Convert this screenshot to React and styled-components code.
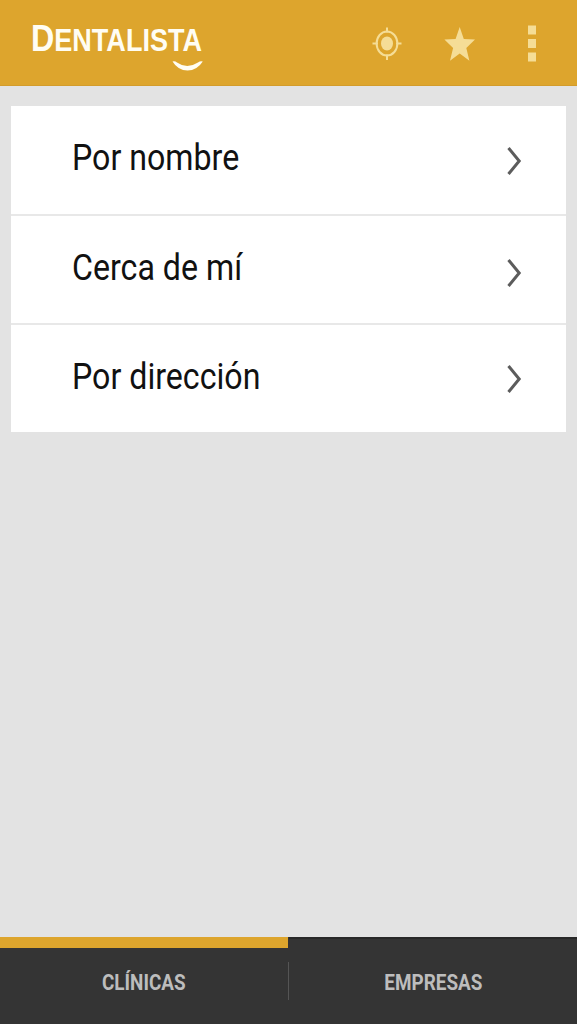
import React from "react";
import styled, { createGlobalStyle } from "styled-components";

const GlobalStyle = createGlobalStyle`
  * { box-sizing: border-box; }
  body { margin: 0; background: #e3e3e3; font-family: Roboto, "Liberation Sans", sans-serif; }
`;

const Screen = styled.div`
  display: flex;
  flex-direction: column;
  width: 100%;
  height: 100vh;
  min-height: 1024px;
  background: #e3e3e3;
`;

const Header = styled.header`
  display: flex;
  justify-content: space-between;
  height: 86px;
  flex: none;
  background: #dda52d;
  border-bottom: 1px solid #d39c2b;
`;

const Brand = styled.div`
  display: flex;
  flex-direction: column;
  width: 180px;
  padding: 18px 0 0 31px;
`;

const BrandName = styled.span`
  height: 42px;
  font: bold 31px/41px "Liberation Sans", Arial, sans-serif;
  color: #fffdf3;
  white-space: nowrap;
  transform: scaleX(0.872);
  transform-origin: left;
`;

const Initial = styled.span`
  font-size: 37px;
`;

const Smile = styled.svg`
  width: 31px;
  height: 11px;
  margin-left: 141px;
  flex: none;
`;

const Actions = styled.div`
  display: flex;
  padding-right: 9px;
`;

const Action = styled.button`
  display: flex;
  align-items: center;
  justify-content: center;
  width: 72.5px;
  height: 87px;
  padding: 0;
  border: 0;
  background: none;
  color: #f5dd96;
`;

const Options = styled.main`
  display: flex;
  flex-direction: column;
  flex: 1;
  padding: 20px 11px 0;
`;

const Option = styled.a`
  display: flex;
  justify-content: space-between;
  height: 109px;
  padding: 0 44px 0 61px;
  background: #fff;
  border-bottom: 2px solid #e8e8e8;

  &:first-child { height: 110px; }
  &:last-child { height: 107px; border-bottom: 0; }
`;

const OptionLabel = styled.span`
  font-size: 36px;
  line-height: 105px;
  color: #111;
  white-space: nowrap;
  transform: scaleX(0.893);
  transform-origin: left;
`;

const Chevron = styled.svg`
  width: 16px;
  height: 30px;
  margin-top: ${(p) => p.$top}px;
`;

const Tabs = styled.nav`
  display: flex;
  height: 87px;
  flex: none;
  background: #343434;
`;

const Tab = styled.button`
  display: flex;
  justify-content: center;
  flex: ${(p) => (p.$active ? "0 0 288px" : "1")};
  height: 87px;
  padding: 0;
  border: 0;
  border-top: ${(p) => (p.$active ? "11px solid #dda52d" : "2px solid #292929")};
  background: none;
`;

const TabLabel = styled.span`
  padding-top: ${(p) => (p.$active ? 18 : 27)}px;
  font: bold 22.5px/32px Roboto, sans-serif;
  color: #bdbdbd;
  white-space: nowrap;
  transform: scaleX(0.84);
`;

const Divider = styled.span`
  width: 1px;
  height: 38px;
  margin-top: 25px;
  background: #555;
`;

const options = [
  { label: "Por nombre", top: 40 },
  { label: "Cerca de mí", top: 42 },
  { label: "Por dirección", top: 39 },
];

export default function App() {
  return (
    <>
      <GlobalStyle />
      <Screen>
        <Header>
          <Brand>
            <BrandName><Initial>D</Initial>ENTALISTA</BrandName>
            <Smile viewBox="0 0 31 11">
              <path d="M0.5 1.5 Q3 0.8 5 2.5 Q15 9.5 26 2.5 Q28.5 0.5 30.8 1.5 Q25 10.5 15.5 10.5 Q6 10.5 0.5 1.5Z" fill="#fffdf3" />
            </Smile>
          </Brand>
          <Actions>
            <Action aria-label="Ubicación">
              <svg width="30" height="34" viewBox="0 0 30 34" fill="none" stroke="currentColor" strokeWidth="2">
                <ellipse cx="15" cy="16.5" rx="10.4" ry="12" />
                <ellipse cx="15" cy="16.5" rx="6" ry="7" fill="currentColor" stroke="none" />
                <path d="M15 0.5V5.5M15 27.5V33M0.5 16.5H6M24 16.5H29.5" />
              </svg>
            </Action>
            <Action aria-label="Favoritos">
              <svg width="32" height="36" viewBox="0 0 32 36" fill="currentColor">
                <path d="M16.7 1 L20.8 13.1 L32 13.6 L23.3 21.9 L26.4 34.7 L16.7 27.5 L7 34.7 L10.1 21.9 L1.4 13.6 L12.6 13.1Z" />
              </svg>
            </Action>
            <Action aria-label="Más opciones">
              <svg width="10" height="38" viewBox="0 0 10 38" fill="currentColor">
                <path d="M1 0.5H9V9.5H1ZM1 14H9V23H1ZM1 27.5H9V36.5H1Z" />
              </svg>
            </Action>
          </Actions>
        </Header>
        <Options>
          {options.map(({ label, top }) => (
            <Option key={label}>
              <OptionLabel>{label}</OptionLabel>
              <Chevron $top={top} viewBox="0 0 16 30" fill="none" stroke="#5c5c5c" strokeWidth="3">
                <path d="M2.5 2 L13.2 15 L2.5 28" />
              </Chevron>
            </Option>
          ))}
        </Options>
        <Tabs>
          <Tab $active><TabLabel $active>CLÍNICAS</TabLabel></Tab>
          <Divider />
          <Tab><TabLabel>EMPRESAS</TabLabel></Tab>
        </Tabs>
      </Screen>
    </>
  );
}
